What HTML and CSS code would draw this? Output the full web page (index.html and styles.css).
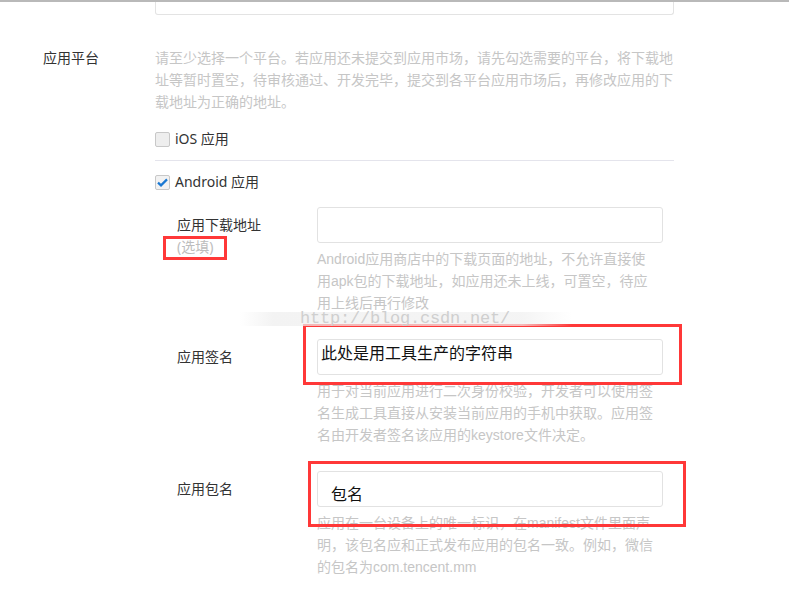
FILE: index.html
```html
<!DOCTYPE html>
<html lang="zh-CN">
<head>
<meta charset="utf-8">
<title>应用平台</title>
<link rel="stylesheet" href="styles.css">
</head>
<body>
<div class="topbar"></div>
<div class="page">
  <div class="stub-row"><div class="stub-input"></div></div>

  <div class="form-row">
    <div class="form-label">应用平台</div>
    <div class="form-content">
      <p class="help">请至少选择一个平台。若应用还未提交到应用市场，请先勾选需要的平台，将下载地址等暂时置空，待审核通过、开发完毕，提交到各平台应用市场后，再修改应用的下载地址为正确的地址。</p>

      <label class="check-row first">
        <span class="checkbox"></span>
        <span class="check-text">iOS 应用</span>
      </label>
      <div class="divider"></div>
      <label class="check-row">
        <span class="checkbox checked">
          <svg width="11" height="9" viewBox="0 0 11 9"><path d="M1 4.6 L4 7.4 L10 1.4" fill="none" stroke="#1a78d2" stroke-width="2.2"/></svg>
        </span>
        <span class="check-text">Android 应用</span>
      </label>

      <div class="sub-form">
        <div class="sub-row">
          <div class="sub-label">
            <div>应用下载地址</div>
            <div class="optional">(选填)<span class="mark mark-optional"></span></div>
          </div>
          <div class="sub-field">
            <div class="input"></div>
            <p class="help sub-help">Android应用商店中的下载页面的地址，不允许直接使用apk包的下载地址，如应用还未上线，可置空，待应用上线后再行修改</p>
          </div>
        </div>

        <div class="sub-row">
          <div class="sub-label">应用签名</div>
          <div class="sub-field">
            <div class="input input-sign">此处是用工具生产的字符串<span class="mark mark-sign"></span></div>
            <p class="help sub-help">用于对当前应用进行二次身份校验，开发者可以使用签名生成工具直接从安装当前应用的手机中获取。应用签名由开发者签名该应用的keystore文件决定。</p>
          </div>
        </div>

        <div class="sub-row">
          <div class="sub-label">应用包名</div>
          <div class="sub-field">
            <div class="input input-pkg">包名<span class="mark mark-pkg"></span></div>
            <p class="help sub-help">应用在一台设备上的唯一标识，在manifest文件里面声明，该包名应和正式发布应用的包名一致。例如，微信的包名为com.tencent.mm</p>
          </div>
        </div>
      </div>
    </div>
  </div>
</div>
<div class="watermark"><span class="watermark-band"></span><span class="watermark-text">http://blog.csdn.net/</span></div>
</body>
</html>
```

FILE: styles.css
```css
html, body {
  margin: 0;
  padding: 0;
  background: #fff;
}
body {
  font-family: "Noto Sans", "Noto Sans CJK SC", sans-serif;
  font-size: 14px;
  color: #333;
  position: relative;
  width: 789px;
  height: 613px;
  overflow: hidden;
}
.topbar {
  height: 2px;
  background: #b9b9b9;
}
.page {
  padding-left: 43px;
}
.stub-row {
  padding-left: 112px;
}
.stub-input {
  width: 517px;
  height: 12px;
  border: 1px solid #e3e3e3;
  border-top: none;
  border-radius: 0 0 3px 3px;
}
.form-row {
  display: flex;
  margin-top: 32px;
}
.form-label {
  width: 112px;
  flex: none;
  line-height: 22px;
  color: #333;
}
.form-content {
  width: 519px;
  flex: none;
}
.help {
  margin: 0;
  color: #c6c6c6;
  line-height: 22px;
  font-size: 14px;
  font-family: "Liberation Sans", "Noto Sans CJK SC", sans-serif;
}
.check-row {
  display: flex;
  align-items: center;
  height: 22px;
  gap: 5px;
  color: #333;
}
.check-row.first {
  margin-top: 15px;
}
.checkbox {
  width: 13px;
  height: 13px;
  border: 1px solid #c8c8c8;
  background: #eeeeee;
  border-radius: 2px;
  display: flex;
  align-items: center;
  justify-content: center;
}
.checkbox.checked {
  background: #f2f2f2;
}
.check-text {
  line-height: 22px;
  color: #333;
}
.divider {
  height: 1px;
  background: #e4e4ec;
  margin: 10px 0;
}
.sub-form {
  padding-left: 22px;
  margin-top: 14px;
  display: flex;
  flex-direction: column;
  gap: 25px;
}
.sub-row {
  display: flex;
}
.sub-label {
  width: 140px;
  flex: none;
  padding-top: 7px;
  line-height: 22px;
  color: #333;
}
.optional {
  color: #bdbdbd;
  position: relative;
  display: inline-block;
}
.sub-field {
  width: 346px;
  flex: none;
}
.input {
  position: relative;
  box-sizing: border-box;
  height: 36px;
  border: 1px solid #e2e2e2;
  border-radius: 3px;
  background: #fff;
  color: #111;
  font-family: "Noto Sans CJK SC", "Noto Sans", sans-serif;
  font-size: 16px;
  line-height: 18px;
}
.input-sign {
  padding: 3px 0 0 3px;
}
.input-pkg {
  padding: 12px 0 0 13px;
}
.sub-help {
  margin-top: 5px;
  width: 340px;
}
.mark {
  position: absolute;
  border: 3px solid #ff3838;
  box-sizing: border-box;
  pointer-events: none;
}
.mark-optional {
  left: -14px;
  top: 0px;
  width: 64px;
  height: 24px;
}
.mark-sign {
  left: -15px;
  top: -16px;
  width: 379px;
  height: 61px;
}
.mark-pkg {
  left: -10px;
  top: -11px;
  width: 378px;
  height: 66px;
}
.watermark {
  position: absolute;
  left: 240px;
  top: 308px;
  width: 332px;
  height: 22px;
}
.watermark-band {
  position: absolute;
  left: 0;
  top: 4px;
  width: 332px;
  height: 14px;
  background: linear-gradient(90deg, rgba(238,238,238,0) 0%, rgba(238,238,238,0.7) 10%, rgba(240,240,240,0.7) 85%, rgba(240,240,240,0) 100%);
}
.watermark-text {
  position: absolute;
  left: 60px;
  top: 0;
  font-family: "Liberation Mono", "DejaVu Sans Mono", monospace;
  font-size: 17px;
  line-height: 22px;
  color: #cfcfcf;
  letter-spacing: -0.2px;
}
```
